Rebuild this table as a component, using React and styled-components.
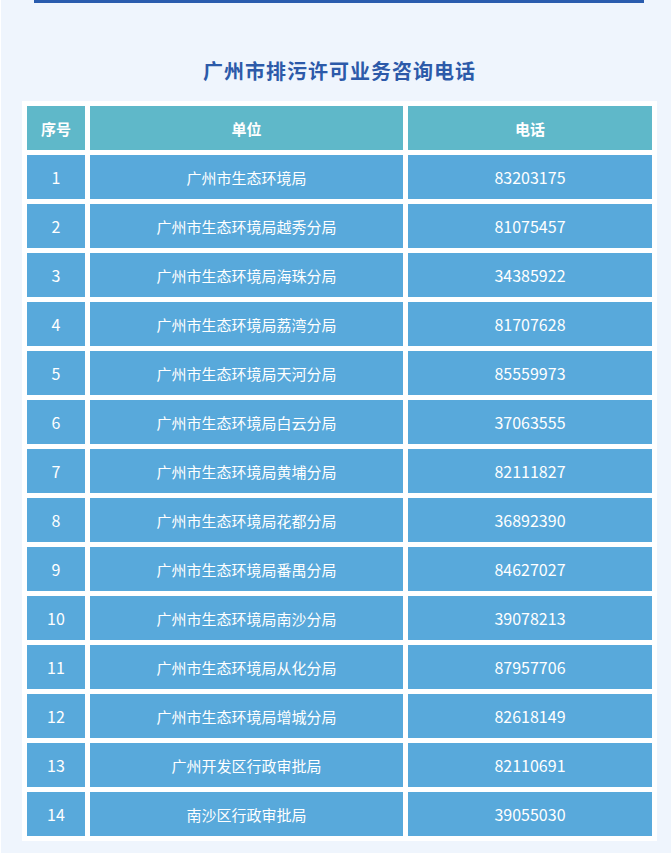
import React from 'react';
import styled, { createGlobalStyle } from 'styled-components';

const GlobalStyle = createGlobalStyle`
    html, body {
        margin: 0;
        padding: 0;
        background: #ffffff;
    }
    body {
        font-family: 'Noto Sans CJK SC', 'Noto Sans', sans-serif;
    }
`;

const phoneList = [
    { id: 1, unit: '广州市生态环境局', phone: '83203175' },
    { id: 2, unit: '广州市生态环境局越秀分局', phone: '81075457' },
    { id: 3, unit: '广州市生态环境局海珠分局', phone: '34385922' },
    { id: 4, unit: '广州市生态环境局荔湾分局', phone: '81707628' },
    { id: 5, unit: '广州市生态环境局天河分局', phone: '85559973' },
    { id: 6, unit: '广州市生态环境局白云分局', phone: '37063555' },
    { id: 7, unit: '广州市生态环境局黄埔分局', phone: '82111827' },
    { id: 8, unit: '广州市生态环境局花都分局', phone: '36892390' },
    { id: 9, unit: '广州市生态环境局番禺分局', phone: '84627027' },
    { id: 10, unit: '广州市生态环境局南沙分局', phone: '39078213' },
    { id: 11, unit: '广州市生态环境局从化分局', phone: '87957706' },
    { id: 12, unit: '广州市生态环境局增城分局', phone: '82618149' },
    { id: 13, unit: '广州开发区行政审批局', phone: '82110691' },
    { id: 14, unit: '南沙区行政审批局', phone: '39055030' },
];

const PageContainer = styled.div`
    margin-left: 1px;
    width: 670px;
    box-sizing: border-box;
    padding: 0 14px 12px 21px;
    background: #eff5fd;
`;

const TopLine = styled.div`
    width: 610px;
    height: 3px;
    margin-left: 12px;
    background: #2a5cae;
`;

const Title = styled.h2`
    margin: 53px 0 0 0;
    height: 45px;
    line-height: 30px;
    text-align: center;
    font-size: 20px;
    font-weight: 700;
    letter-spacing: 1px;
    color: #2c5aa9;
`;

const PhoneTable = styled.table`
    width: 635px;
    border-spacing: 5px;
    background: #ffffff;
    table-layout: fixed;
`;

const HeadCell = styled.th`
    width: ${(props) => props.$width}px;
    height: 44px;
    padding: 0;
    background: #5fb8c9;
    color: #ffffff;
    font-size: 15px;
    font-weight: 700;
    text-align: center;
`;

const Cell = styled.td`
    height: 44px;
    padding: 0;
    background: #58a9db;
    color: #ffffff;
    font-size: ${(props) => (props.$number ? 16 : 15)}px;
    text-align: center;
`;

const App = () => {
    return (
        <>
            <GlobalStyle />
            <PageContainer>
                <TopLine />
                <Title>广州市排污许可业务咨询电话</Title>
                <PhoneTable>
                    <thead>
                        <tr>
                            <HeadCell $width={58}>序号</HeadCell>
                            <HeadCell $width={313}>单位</HeadCell>
                            <HeadCell $width={244}>电话</HeadCell>
                        </tr>
                    </thead>
                    <tbody>
                        {phoneList.map((item) => (
                            <tr key={item.id}>
                                <Cell $number>{item.id}</Cell>
                                <Cell>{item.unit}</Cell>
                                <Cell $number>{item.phone}</Cell>
                            </tr>
                        ))}
                    </tbody>
                </PhoneTable>
            </PageContainer>
        </>
    );
};

export default App;
